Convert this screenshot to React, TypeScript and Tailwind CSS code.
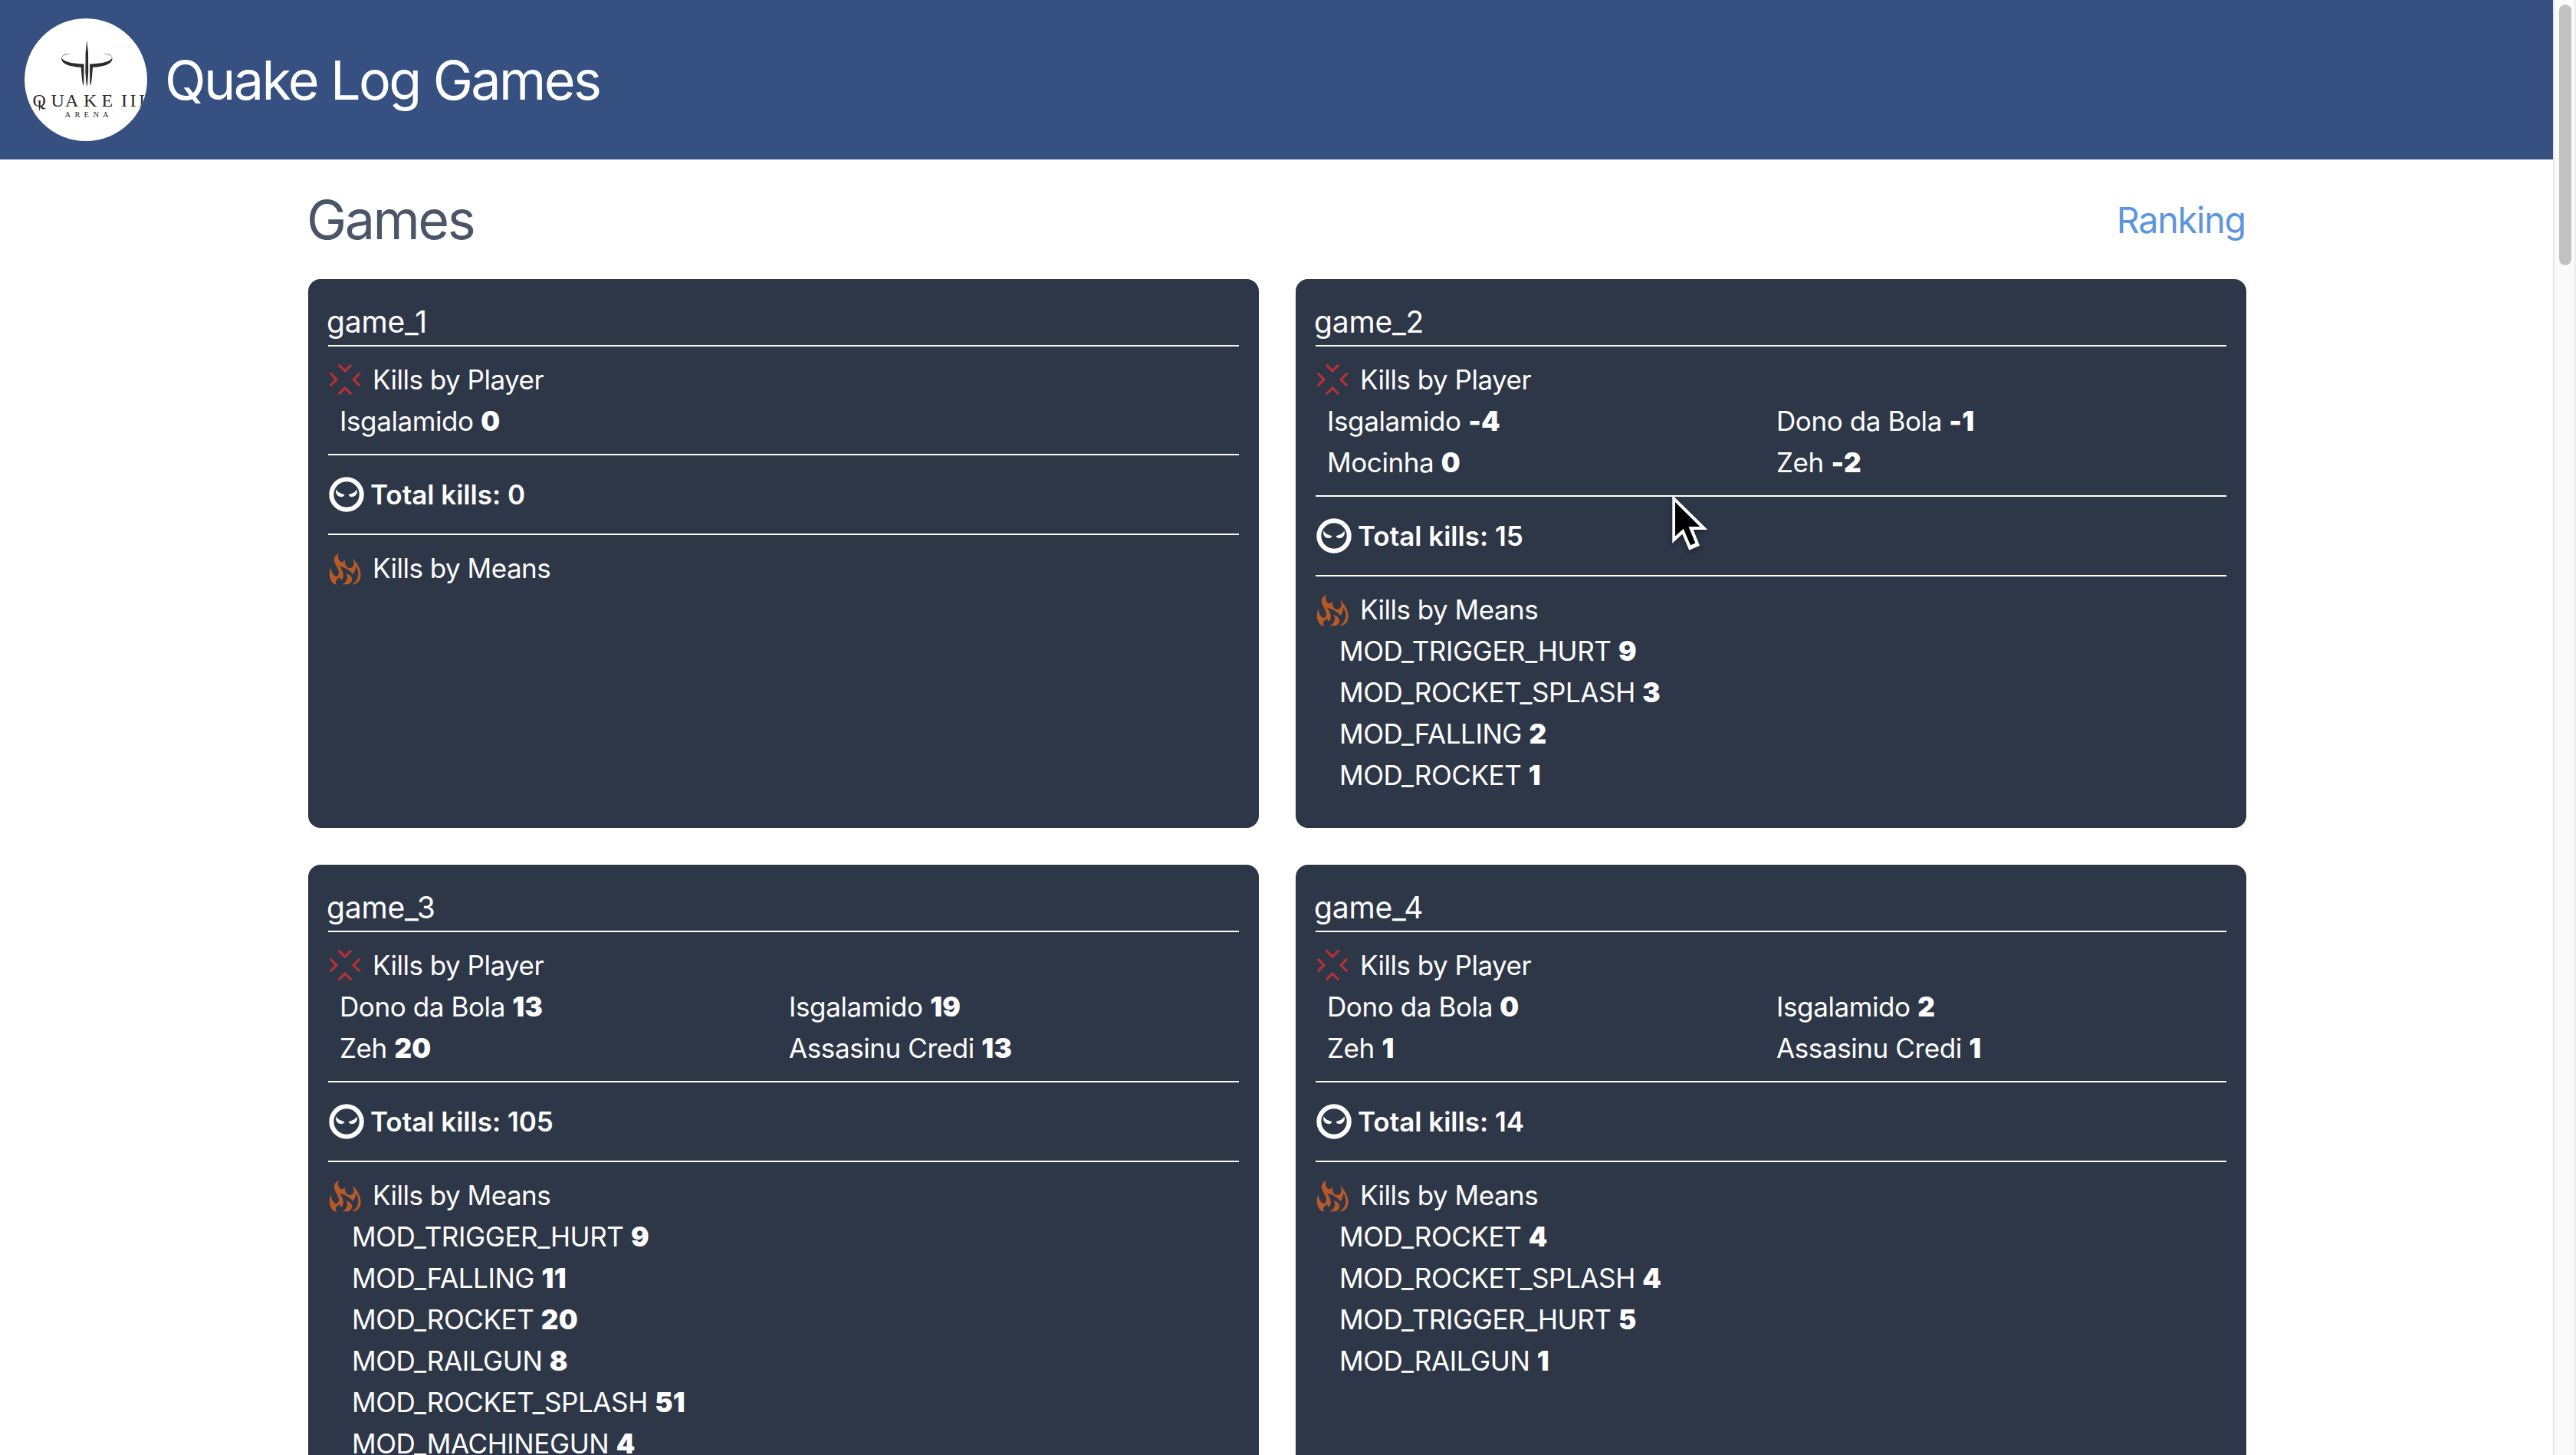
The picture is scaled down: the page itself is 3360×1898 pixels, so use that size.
import type { ReactNode } from "react";
import { GiConvergenceTarget, GiSmallFire } from "react-icons/gi";

type Entry = [name: string, value: number];

interface Game {
  name: string;
  players: Entry[];
  total: number;
  means: Entry[];
}

const games: Game[] = [
  { name: "game_1", players: [["Isgalamido", 0]], total: 0, means: [] },
  {
    name: "game_2",
    players: [["Isgalamido", -4], ["Dono da Bola", -1], ["Mocinha", 0], ["Zeh", -2]],
    total: 15,
    means: [["MOD_TRIGGER_HURT", 9], ["MOD_ROCKET_SPLASH", 3], ["MOD_FALLING", 2], ["MOD_ROCKET", 1]],
  },
  {
    name: "game_3",
    players: [["Dono da Bola", 13], ["Isgalamido", 19], ["Zeh", 20], ["Assasinu Credi", 13]],
    total: 105,
    means: [
      ["MOD_TRIGGER_HURT", 9],
      ["MOD_FALLING", 11],
      ["MOD_ROCKET", 20],
      ["MOD_RAILGUN", 8],
      ["MOD_ROCKET_SPLASH", 51],
      ["MOD_MACHINEGUN", 4],
    ],
  },
  {
    name: "game_4",
    players: [["Dono da Bola", 0], ["Isgalamido", 2], ["Zeh", 1], ["Assasinu Credi", 1]],
    total: 14,
    means: [["MOD_ROCKET", 4], ["MOD_ROCKET_SPLASH", 4], ["MOD_TRIGGER_HURT", 5], ["MOD_RAILGUN", 1]],
  },
];

function Logo() {
  return (
    <svg viewBox="0 0 160 160" className="size-40 shrink-0 rounded-full bg-white" fill="#2b2b2b">
      {/* centre blade */}
      <path d="M81.3 28.3 L83 45 L83.2 70 L82.2 84 L81.3 89.5 L80.4 84 L79.4 70 L79.6 45 Z" />
      {/* left horn and prong */}
      <path d="M60 46.6 C50 47 47 50.5 49.4 53 C53 56.600 62 59 77.500 59.600 L77.500 64 L77.300 85 L76.300 87.800 L75 80 L73.600 63.800 C60 63 50 60.500 48.200 53.500 C47.200 48 54 45.200 60 46.600 Z" />
      {/* right horn and prong */}
      <path d="M102.600 46.600 C112.600 47 115.600 50.500 113.200 53 C109.600 56.600 100.600 59 85.100 59.600 L85.100 64 L85.300 85 L86.300 87.800 L87.600 80 L89 63.800 C102.600 63 112.600 60.500 114.400 53.500 C115.400 48 108.600 45.200 102.600 46.600 Z" />
      <text x="10.5 34.5 53 77 100.500 126 137.500 149" y="114.700" fontSize="24" className="font-['Liberation_Serif']">
        QUAKEIII
      </text>
      {/* spike through the Q */}
      <path d="M18.300 107 H20.900 L20.600 115 L19.600 121.500 L18.600 115 Z" />
      <text x="52.500 65.500 77.500 89.500 102" y="128.700" fontSize="10.500" className="font-['Liberation_Serif']">
        ARENA
      </text>
    </svg>
  );
}

function EvilFace() {
  return (
    <svg viewBox="0 0 48 48" className="size-12 shrink-0" fill="currentColor">
      <circle cx="24" cy="24" r="19.700" fill="none" stroke="currentColor" strokeWidth="6" />
      <path d="M10.600 17.200 C11.600 20.300 15 22.200 21.500 24.200 C20.500 26.400 18.600 27.300 16.500 27.100 C12.300 26.700 8.800 22.600 10.600 17.200 Z" />
      <path d="M37.400 17.200 C36.400 20.300 33 22.200 26.500 24.200 C27.500 26.400 29.400 27.300 31.500 27.100 C35.700 26.700 39.200 22.600 37.400 17.200 Z" />
    </svg>
  );
}

function SectionTitle({ icon, children }: { icon: ReactNode; children: ReactNode }) {
  return (
    <div className="flex h-[54px] items-center gap-3.5 tracking-[-0.5px]">
      {icon}
      <span>{children}</span>
    </div>
  );
}

function Stat({ entry: [name, value] }: { entry: Entry }) {
  return (
    <li className="h-[54px] whitespace-nowrap">
      {name} <span className="font-black tracking-[0.3px]">{value}</span>
    </li>
  );
}

function GameCard({ game }: { game: Game }) {
  return (
    <article className="rounded-2xl border-2 border-[#2e3748] bg-[#2e3748] p-6 text-[35px] leading-[54px] tracking-[-0.4px] text-white">
      <h2 className="h-[62px] border-b-2 border-white text-[39px] leading-[60px] tracking-[-0.2px]">
        <span className="-ml-0.5">{game.name}</span>
      </h2>
      <section className="border-b-2 border-white py-4">
        <SectionTitle icon={<GiConvergenceTarget className="size-11 text-[#b83236]" />}>Kills by Player</SectionTitle>
        <ul className="grid grid-cols-[586px_1fr] pl-[15px]">
          {game.players.map((entry) => (
            <Stat key={entry[0]} entry={entry} />
          ))}
        </ul>
      </section>
      <section className="flex items-center gap-[7px] border-b-2 border-white py-6 font-semibold">
        <EvilFace />
        <span className="tracking-normal">Total kills: {game.total}</span>
      </section>
      <section className="py-4">
        <SectionTitle icon={<GiSmallFire className="mt-0.5 size-11 text-[#b85a27]" />}>Kills by Means</SectionTitle>
        <ul className="pl-[31px]">
          {game.means.map((entry) => (
            <Stat key={entry[0]} entry={entry} />
          ))}
        </ul>
      </section>
    </article>
  );
}

function Scrollbar() {
  return (
    <div className="w-[30px] shrink-0 border-x-2 border-l-[#e8e8e8] border-r-[#ededed] bg-[#fafafa] pl-1.5 pt-1.5">
      <div className="h-[340px] w-4 rounded-full bg-[#c1c1c1]" />
    </div>
  );
}

function Pointer() {
  return (
    <svg
      viewBox="0 0 50 78"
      className="absolute left-[2180px] top-[644px] h-[78px] w-[50px] drop-shadow-[0_3px_3px_rgba(0,0,0,0.35)]"
    >
      <path d="M1.300 1.700 V64.700 L14.300 52.700 L23.300 73.700 L37 67.700 L28.700 47 H47.300 Z" fill="#fff" />
      <path d="M5 11 V55.500 L15.800 45.800 L25 67.300 L31.300 64.500 L22.500 43 H37.300 Z" fill="#000" />
    </svg>
  );
}

export default function App() {
  return (
    <div className="relative flex h-[1898px] w-[3360px] overflow-hidden bg-white font-['Inter',sans-serif]">
      <div className="min-w-0 flex-1">
        <header className="flex h-52 items-center gap-[23px] bg-[#365082] px-8 text-white">
          <Logo />
          <h1 className="pt-0.5 text-[70px] leading-none tracking-[-2.6px]">Quake Log Games</h1>
        </header>
        <main className="ml-[402px] w-[2528px]">
          <div className="flex h-[156px] items-center justify-between pt-0.5">
            <h2 className="-ml-0.5 text-[70px] leading-none tracking-[-2.5px] text-[#4b5568]">Games</h2>
            <a className="mr-px text-[46.5px] leading-none tracking-[-1.1px] text-[#5b96dd]">Ranking</a>
          </div>
          <div className="grid grid-cols-2 gap-12">
            {games.map((game) => (
              <GameCard key={game.name} game={game} />
            ))}
          </div>
        </main>
      </div>
      <Scrollbar />
      <Pointer />
    </div>
  );
}
